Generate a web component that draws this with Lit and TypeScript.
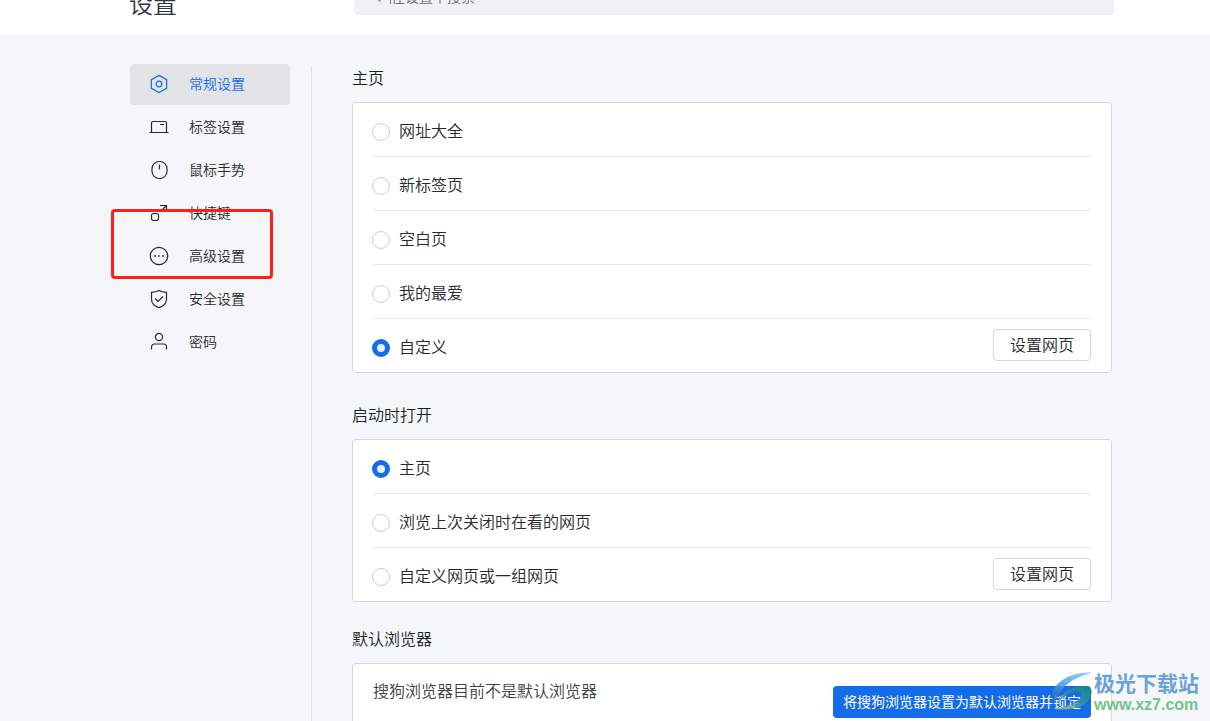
import { LitElement, html, svg, css, nothing } from "lit";
import { customElement, property, state } from "lit/decorators.js";

const icons: Record<string, unknown> = {
  general: svg`<path d="M10 1.4 17.6 5.6V14.4L10 18.6 2.4 14.4V5.6Z"/><circle cx="10" cy="10" r="2.8"/>`,
  tabs: svg`<path d="M.5 15.5H19.5M2.5 15.5V6A1.5 1.5 0 0 1 4 4.5H16A1.5 1.5 0 0 1 17.5 6V15.5M11 7.5H15"/>`,
  mouse: svg`<rect x="3" y="1.5" width="15" height="17" rx="7.2"/><path d="M10.5 4.5V9.5"/>`,
  keys: svg`<rect x="2.5" y="10.5" width="7" height="7" rx="2"/><path d="M11 2.5H17.5V8M17.5 2.5 11 9"/>`,
  more: svg`<circle cx="10" cy="10" r="8.7"/><path d="M5.2 10H6.8M9.2 10H10.8M13.2 10H14.8" stroke-width="1.6"/>`,
  shield: svg`<path d="M10 1.5C12 2.7 15 3.2 17.5 3.3V10C17.5 14.5 14 17.3 10 18.6 6 17.3 2.5 14.5 2.5 10V3.3C5 3.2 8 2.7 10 1.5ZM6 9.5 9 12.5 14 7.5"/>`,
  user: svg`<circle cx="10" cy="5" r="3.6"/><path d="M2.500 17.500V15A3 3 0 0 1 5.500 12H14.500A3 3 0 0 1 17.500 15V17.500"/>`,
};

const navItems = [
  ["general", "常规设置"],
  ["tabs", "标签设置"],
  ["mouse", "鼠标手势"],
  ["keys", "快捷键"],
  ["more", "高级设置"],
  ["shield", "安全设置"],
  ["user", "密码"],
];

@customElement("settings-nav")
class SettingsNav extends LitElement {
  static styles = css`
    :host { display: block; }
    .list { display: flex; flex-direction: column; gap: 2px; }
    .item {
      display: flex; align-items: center; gap: 20px; height: 41px; padding: 0 19px 2px;
      box-sizing: border-box; border-radius: 4px; color: #262a2e; text-decoration: none;
      font-size: 14px; line-height: 20px;
    }
    .item.active { background: #e2e3e4; color: #146ceb; }
    .icon { width: 20px; height: 20px; fill: none; stroke: currentColor; stroke-width: 1.2; }
    .label { padding-bottom: 2px; }
  `;
  @state() current = "general";

  render() {
    return html`<nav class="list">
      ${navItems.map(([id, label]) => html`<a
        class="item ${id === this.current ? "active" : ""}" href="#${id}"
        @click=${() => (this.current = id)}
      ><svg class="icon" viewBox="0 0 20 20" aria-hidden="true">${icons[id]}</svg><span class="label">${label}</span></a>`)}
    </nav>`;
  }
}

@customElement("radio-card")
class RadioCard extends LitElement {
  static styles = css`
    :host { display: block; background: #fff; border: 1px solid #d5d6da; border-radius: 4px; padding: 0 20px; }
    .row { display: flex; align-items: center; height: 53px; }
    .row + .row { border-top: 1px solid #e8e9eb; }
    .option { flex: 1; display: flex; align-items: center; gap: 9px; margin-left: -1px; font-size: 16px; line-height: 24px; color: #262a2e; }
    .radio {
      appearance: none; width: 18px; height: 18px; margin: 4px 0 0; box-sizing: border-box; flex: none;
      border: 1px solid #ccced2; border-radius: 50%; background: #fff;
    }
    .radio:checked { border: 5px solid #146ceb; background: #e6effd; }
    .button {
      width: 98px; height: 32px; margin: 0 0 2px; padding: 0 0 2px; box-sizing: border-box; border: 1px solid #d5d6da;
      border-radius: 4px; background: #fff; color: #262a2e; font: inherit; font-size: 16px;
    }
  `;
  @property() name = "";
  @property({ type: Array }) options: string[] = [];
  @property({ type: Number }) selected = 0;

  render() {
    return this.options.map((text, i) => html`<div class="row">
      <label class="option"><input class="radio" type="radio" name=${this.name}
        .checked=${i === this.selected} @change=${() => (this.selected = i)} /><span>${text}</span></label>
      ${i === this.options.length - 1 ? html`<button class="button">设置网页</button>` : nothing}
    </div>`);
  }
}

@customElement("site-mark")
class SiteMark extends LitElement {
  static styles = css`
    :host { display: flex; align-items: flex-start; }
    .logo { width: 42px; height: 42px; flex: none; }
    .words { display: flex; flex-direction: column; white-space: nowrap; }
    .name { font-size: 21px; line-height: 22px; font-weight: 700; color: #6ba2d8; }
    .site { font-family: "Liberation Sans", Arial, sans-serif; font-size: 16px; line-height: 24px; font-weight: 700; color: #72c48c; }
  `;
  render() {
    return html`<svg class="logo" viewBox="0 0 42 42" aria-hidden="true">
        <defs>
          <linearGradient id="sky" x1="0" y1="1" x2="1" y2="0"><stop offset="0" stop-color="#2568b4"/><stop offset=".5" stop-color="#4fa3e0"/><stop offset="1" stop-color="#8fd0f2"/></linearGradient>
          <linearGradient id="leaf" x1="0" y1="1" x2="1" y2="0"><stop offset="0" stop-color="#b5cf6a"/><stop offset=".5" stop-color="#3b8fa0"/><stop offset="1" stop-color="#0d9070"/></linearGradient>
        </defs>
        <path d="M41 2C23-1 0 11 0 25 0 28 1 30 3 32 6 20 18 6 41 2Z" fill="url(#sky)" opacity=".85"/>
        <path d="M5 33C10 19 24 13 38 16 41 20 40 25 36 30 30 37 17 40 2 38 15 36 27 31 29 25 30 17 16 19 5 33Z" fill="url(#leaf)" opacity=".8"/>
      </svg>
      <div class="words"><span class="name">极光下载站</span><span class="site">www.xz7.com</span></div>`;
  }
}

@customElement("app-root")
class AppRoot extends LitElement {
  static styles = css`
    :host {
      display: block; position: relative; height: 100vh; overflow: hidden; background: #f5f6fa;
      font-family: "Noto Sans CJK SC", sans-serif; font-weight: 350; color: #1c1f23;
    }
    .header {
      display: flex; align-items: flex-end; height: 36px; box-sizing: border-box; overflow: hidden;
      padding: 0 96px 20px 129px; background: #fff; border-bottom: 1px solid #eeeff1;
    }
    .title { width: 225px; flex: none; margin: 0; font-size: 24px; line-height: 24px; font-weight: 350; color: #30363c; }
    .search {
      flex: 1; display: flex; align-items: center; gap: 9px; height: 38px; padding: 0 15px;
      box-sizing: border-box; background: #f0f1f5; border-radius: 4px;
    }
    .glass { width: 12px; height: 12px; fill: none; stroke: #777b80; stroke-width: 1.2; }
    .field {
      flex: 1; height: 16px; border: 0; border-left: 1px solid #777b80; outline: 0; padding: 0;
      background: none; font: inherit; font-size: 14px; line-height: 16px; color: #333;
    }
    .field::placeholder { color: #6b6f74; opacity: 1; }
    .body { display: flex; padding: 0 98px 0 130px; min-height: 100vh; }
    .side { width: 160px; flex: none; margin-top: 28px; }
    .divider { width: 1px; flex: none; margin: 30px 40px 0 21px; background: #e0e1e6; }
    .main { flex: 1; min-width: 0; padding-top: 18px; }
    .heading { margin: 0; padding-bottom: 2px; font-size: 16px; line-height: 46px; font-weight: 350; }
    .group { padding-bottom: 18px; }
    .group.tight { padding-bottom: 13px; }
    .card {
      display: flex; justify-content: space-between; background: #fff; border: 1px solid #d5d6da;
      border-radius: 4px; padding: 14px 20px; color: #3c4248; font-size: 16px; line-height: 24px;
    }
    .note { margin: 0; }
    .primary {
      height: 32px; margin-top: 8px; padding: 0 10px 2px; border: 0; border-radius: 4px; background: #146ceb; color: #fff;
      font: inherit; font-size: 14px; font-weight: 400; white-space: nowrap;
    }
    .frame {
      position: absolute; left: 111px; top: 209px; width: 162px; height: 70px; box-sizing: border-box;
      border: 3px solid #fc2116; border-radius: 4px; pointer-events: none;
    }
    .mark { position: absolute; right: 11px; bottom: 4px; pointer-events: none; }
  `;

  render() {
    return html`
      <header class="header">
        <h1 class="title">设置</h1>
        <label class="search">
          <svg class="glass" viewBox="0 0 12 12" aria-hidden="true"><circle cx="5" cy="5" r="4"/><path d="M8 8 11.5 11.5"/></svg>
          <input class="field" type="text" placeholder="在设置中搜索" aria-label="在设置中搜索" />
        </label>
      </header>
      <div class="body">
        <settings-nav class="side"></settings-nav>
        <div class="divider"></div>
        <main class="main">
          <section class="group">
            <h2 class="heading">主页</h2>
            <radio-card name="home" .options=${["网址大全", "新标签页", "空白页", "我的最爱", "自定义"]} .selected=${4}></radio-card>
          </section>
          <section class="group tight">
            <h2 class="heading">启动时打开</h2>
            <radio-card name="startup" .options=${["主页", "浏览上次关闭时在看的网页", "自定义网页或一组网页"]} .selected=${0}></radio-card>
          </section>
          <section class="group">
            <h2 class="heading">默认浏览器</h2>
            <div class="card">
              <p class="note">搜狗浏览器目前不是默认浏览器</p>
              <button class="primary">将搜狗浏览器设置为默认浏览器并锁定</button>
            </div>
          </section>
        </main>
      </div>
      <div class="frame"></div>
      <site-mark class="mark"></site-mark>
    `;
  }
}
